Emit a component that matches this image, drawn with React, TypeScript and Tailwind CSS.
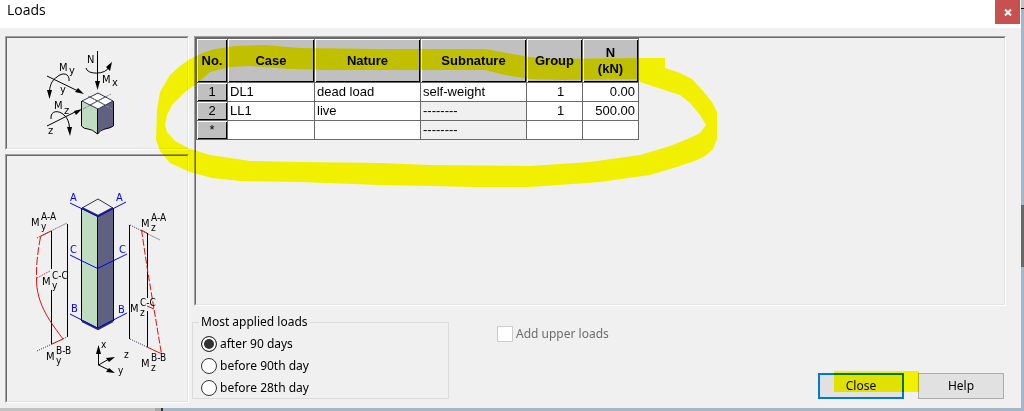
import React from "react";

const loads = [
  { no: "1", name: "DL1", nature: "dead load", subnature: "self-weight", group: "1", n: "0.00", locked: false },
  { no: "2", name: "LL1", nature: "live", subnature: "--------", group: "1", n: "500.00", locked: true },
  { no: "*", name: "", nature: "", subnature: "--------", group: "", n: "", locked: true },
];

const columns = [
  { title: "No.", width: "w-[31px]" },
  { title: "Case", width: "w-[87px]" },
  { title: "Nature", width: "w-[106px]" },
  { title: "Subnature", width: "w-[106px]" },
  { title: "Group", width: "w-[56px]" },
  { title: "N (kN)", width: "w-[56px]" },
];

const ages = ["after 90 days", "before 90th day", "before 28th day"];

const Sunken = ({ className = "", children }: any) => (
  <div className={`border border-t-[#a0a0a0] border-l-[#a0a0a0] border-r-white border-b-white ${className}`}>
    <div className="h-full border border-t-[#696969] border-l-[#696969] border-r-[#e3e3e3] border-b-[#e3e3e3]">
      {children}
    </div>
  </div>
);

const Moment = ({ x, y, axis, at }: any) => (
  <g>
    <text x={x} y={y} className="text-[11px]">M</text>
    <text x={x + 10} y={y - 6}>{at}</text>
    <text x={x + 10} y={y + 4}>{axis}</text>
  </g>
);

const AxesDiagram = () => (
  <svg
    viewBox="7 38 180 110"
    className="block w-[180px] h-[110px] font-['DejaVu_Sans_Condensed','DejaVu_Sans',sans-serif] text-[11px]"
  >
    <path d="M82 101L98 109V134Q92 128 88 129T82 126Z" fill="#c0dcc0" />
    <path d="M98 109L113 101V126Q110 129 105 129T98 134Z" fill="#606080" />
    <path d="M98 93L113 101L98 109L82 101Z" fill="#fff" />
    <path d="M90 97L105 105M105 97L90 105" stroke="#303050" fill="none" />
    <path d="M83 109L111 94M88 96L112 109" stroke="#888" strokeDasharray="4 1" fill="none" />
    <path d="M98 93L113 101L98 109L82 101Z" fill="none" stroke="#303050" />
    <path
      d="M81.500 101V126Q84 129 88 129T97.500 134Q100 130 105 129T113.500 126V101M97.500 109V134"
      fill="none"
      stroke="#000"
    />
    <g fill="none" stroke="#000">
      <path d="M97.500 51V84" />
      <path d="M86 68C87 75 106 75 109 67" />
      <path d="M47 76L78 91" />
      <path d="M69 81C70 73 62 72 57 77C52 80 50 85 49.500 91" />
      <path d="M47 126L77 111" />
      <path d="M51 119C50 110 59 110 64 115Q69 119 69.500 128" />
    </g>
    <path
      d="M95 81H100L97.500 90ZM106 67L112 62L110 71ZM84 94L75 92L78 88ZM47 90H52L49.500 99ZM82 109L74 111L76 115ZM67 127H72L70 136Z"
      fill="#000"
    />
    <text x="87" y="63">N</text>
    <text x="59" y="71">M</text>
    <text x="69" y="74">y</text>
    <text x="102" y="83">M</text>
    <text x="112" y="86">x</text>
    <text x="60" y="93">y</text>
    <text x="54" y="109">M</text>
    <text x="64" y="114">z</text>
    <text x="48" y="134">z</text>
  </svg>
);

const ColumnDiagram = () => (
  <svg
    viewBox="7 156 180 244"
    className="block w-[180px] h-[244px] font-['DejaVu_Sans_Condensed','DejaVu_Sans',sans-serif] text-[10px]"
  >
    <path d="M82 208L98 216V329L82 321Z" fill="#c0dcc0" />
    <path d="M113 208L98 216V329L113 321Z" fill="#606080" />
    <path d="M98 199L113 208L98 216L82 208Z" fill="#f0f0f0" stroke="#303050" />
    <path d="M81.500 208V321M97.500 216V329M113.500 208V321" stroke="#000" />
    <path d="M82 208L98 216L113 208M82 321L98 329L113 321" fill="none" stroke="#303050" strokeWidth="2" />
    <g fill="none" stroke="#0000ff">
      <path d="M70 203L98 216.500L126 202M70 255L97.500 268.500L127 254M70 314L97.500 328L127 313" />
    </g>
    <g fill="#0000ff" className="text-[11px]">
      <text x="70" y="201">A</text>
      <text x="116" y="201">A</text>
      <text x="70" y="253">C</text>
      <text x="119" y="253">C</text>
      <text x="71" y="312">B</text>
      <text x="118" y="313">B</text>
    </g>
    <path
      d="M67.500 224V337M51.500 231V269M51.500 290V344M129.500 225V339M147.500 233V298M147.500 311V347"
      fill="none"
      stroke="#000"
    />
    <g fill="none" stroke="#303050" strokeDasharray="1 1.200">
      <path d="M37 238L67 223M37 351L67 337M130 225L160 240M130 339L147 347" />
    </g>
    <g fill="none" stroke="#e01010">
      <path d="M40 236.500L51 231M52 344L63 339M141 230L147 233M147 347L162 354M147 306L154 309" />
      <path d="M40.500 237Q36 260 36.500 278" strokeDasharray="8 2" />
      <path d="M36.500 278C36 305 52 324 63 339" />
      <path d="M37 278L50 271" strokeDasharray="1 1" />
      <path d="M141.500 230L147.500 270L154 309L161.500 354" strokeDasharray="7 2" />
    </g>
    <Moment x={31} y={226} axis="y" at="A-A" />
    <Moment x={42} y={285} axis="y" at="C-C" />
    <Moment x={46} y={360} axis="y" at="B-B" />
    <Moment x={141} y={227} axis="z" at="A-A" />
    <Moment x={130} y={312} axis="z" at="C-C" />
    <Moment x={141} y={367} axis="z" at="B-B" />
    <path d="M98.500 350V365L109 359M98.500 365L109 370" fill="none" stroke="#000" />
    <path d="M96 354H101L98.500 345ZM115 357L106 358L109 362ZM115 373L109 368L106 372Z" fill="#000" />
    <text x="101" y="348">x</text>
    <text x="124" y="358">z</text>
    <text x="118" y="374">y</text>
  </svg>
);

const LoadsTable = () => (
  <table className="table-fixed w-[443px] border-separate border-spacing-0 border-t border-l border-[#696969] font-['Liberation_Sans',Arial,sans-serif] text-[13px] leading-4">
    <thead>
      <tr className="h-11">
        {columns.map(({ title, width }) => (
          <th
            key={title}
            className={`${width} p-0 bg-[#c0c0c0] border-r border-b border-[#696969] shadow-[inset_1px_1px_0_#fff,inset_-1px_-1px_0_#000]`}
          >
            {title === "N (kN)" ? <>N<br />(kN)</> : title}
          </th>
        ))}
      </tr>
    </thead>
    <tbody>
      {loads.map((load) => (
        <tr key={load.no} className="h-[19px] *:border-r *:border-b *:border-[#696969] bg-white">
          <th className="p-0 font-normal bg-[#c0c0c0] shadow-[inset_1px_1px_0_#fff,inset_-1px_-1px_0_#000]">
            {load.no}
          </th>
          <td className="py-0 px-[2px]">{load.name}</td>
          <td className="py-0 px-[2px]">{load.nature}</td>
          <td className={load.locked ? "py-0 px-[2px] bg-[#f0f0f0]" : "py-0 px-[2px]"}>{load.subnature}</td>
          <td className="py-0 pl-3 text-center">{load.group}</td>
          <td className="py-0 pr-[3px] text-right">{load.n}</td>
        </tr>
      ))}
    </tbody>
  </table>
);

const Highlighter = () => (
  <svg className="absolute top-0 left-0 w-[1000px] h-[400px] mix-blend-multiply pointer-events-none" viewBox="0 0 1000 400">
    <path
      fill="#ffff00"
      fillRule="evenodd"
      d="M235 46L265 45L300 48L380 49L485 49L507 53L530 57L545 59L638 58H665V68L680 73L692 79L703 91L712 102L717 112V139L713 149L705 156L697 160L680 166L650 175L600 182L530 187H475L430 186L380 185L300 182L240 181L212 178L190 172L170 163L160 151L156 140L157 110L160 92L170 75L180 66L190 59L205 52L215 49Z
        M640 82L655 87L680 95L690 103L700 115L706 125L700 133L690 138L670 146L640 155L590 162L530 166L430 165L380 163L300 162L250 161L210 155L190 149L175 141L167 132L165 125L167 115L172 105L185 92L200 81L210 72L230 67L250 66L290 69L325 70H485L505 75L530 79L560 80L638 79Z"
    />
  </svg>
);

const App = () => {
  return (
    <div className="min-h-screen flex flex-col bg-[#a3b7c7] font-['Noto_Sans',sans-serif] text-[12px] leading-4 text-black">
      <div className="flex flex-1">
        <div className="relative flex-1 flex flex-col bg-[#f0f0f0]">
          <header className="flex justify-between h-7 bg-white pl-[7px] pr-px">
            <h1 className="font-['Open_Sans',sans-serif] text-[14px] leading-5">Loads</h1>
            <button aria-label="Close window" className="w-[25px] h-6 flex items-center justify-center bg-[#c75050]">
              <svg viewBox="0 0 8 7" className="w-2 h-[7px]">
                <path d="M1 0.500L7 6.500M7 0.500L1 6.500" stroke="#fff" strokeWidth="2" />
              </svg>
            </button>
          </header>

          <main className="flex flex-1 gap-[3px] pt-2 pl-[5px] pr-[15px] pb-[5px]">
            <div className="flex flex-col gap-1">
              <Sunken>
                <AxesDiagram />
              </Sunken>
              <Sunken className="flex-1">
                <ColumnDiagram />
              </Sunken>
            </div>

            <div className="flex-1 flex flex-col">
              <Sunken className="flex-1 ml-[2px]">
                <LoadsTable />
              </Sunken>
              <div className="flex pt-2 pr-[2px] pb-1">
                <fieldset className="w-[257px] border border-[#dcdcdc] pl-2 pt-[6px] pb-[2px]">
                  <legend className="px-[2px] -ml-[2px]">Most applied loads</legend>
                  <div className="flex flex-col gap-[6px]">
                    {ages.map((age, i) => (
                      <label key={age} className="flex items-center gap-[3px]">
                        <input
                          type="radio"
                          name="age"
                          defaultChecked={i === 0}
                          className="appearance-none w-4 h-4 rounded-full border border-[#333] bg-white checked:bg-[#333] checked:shadow-[inset_0_0_0_2px_#fff]"
                        />
                        {age}
                      </label>
                    ))}
                  </div>
                </fieldset>
                <label className="flex items-center gap-[3px] h-4 mt-3 ml-12 text-[#6d6d6d]">
                  <input
                    type="checkbox"
                    disabled
                    className="appearance-none w-4 h-4 border border-[#ccc] bg-white"
                  />
                  Add upper loads
                </label>
                <div className="flex gap-[14px] ml-auto self-end">
                  <button className="w-[86px] h-[26px] bg-[#e1e1e1] border-2 border-[#0078d7]">Close</button>
                  <button className="w-[86px] h-[26px] bg-[#e1e1e1] border border-[#adadad]">Help</button>
                </div>
              </div>
            </div>
          </main>
          <Highlighter />
          <div className="absolute right-[102px] bottom-4 w-[85px] h-[21px] bg-[#ffff00] mix-blend-multiply pointer-events-none" />
        </div>

        <div className="w-[3px] flex flex-col">
          <div className="h-2 bg-[#c4c4c4]" />
          <div className="h-px bg-black" />
          <div className="h-[196px]" />
          <div className="h-[62px] bg-[#686868]" />
        </div>
      </div>
      <div className="flex h-[3px]">
        <div className="w-[155px] bg-[#c2c2c2]" />
        <div className="w-[6px] bg-[#a8a8a8]" />
        <div className="w-[2px] bg-[#303030]" />
      </div>
    </div>
  );
};

export default App;
